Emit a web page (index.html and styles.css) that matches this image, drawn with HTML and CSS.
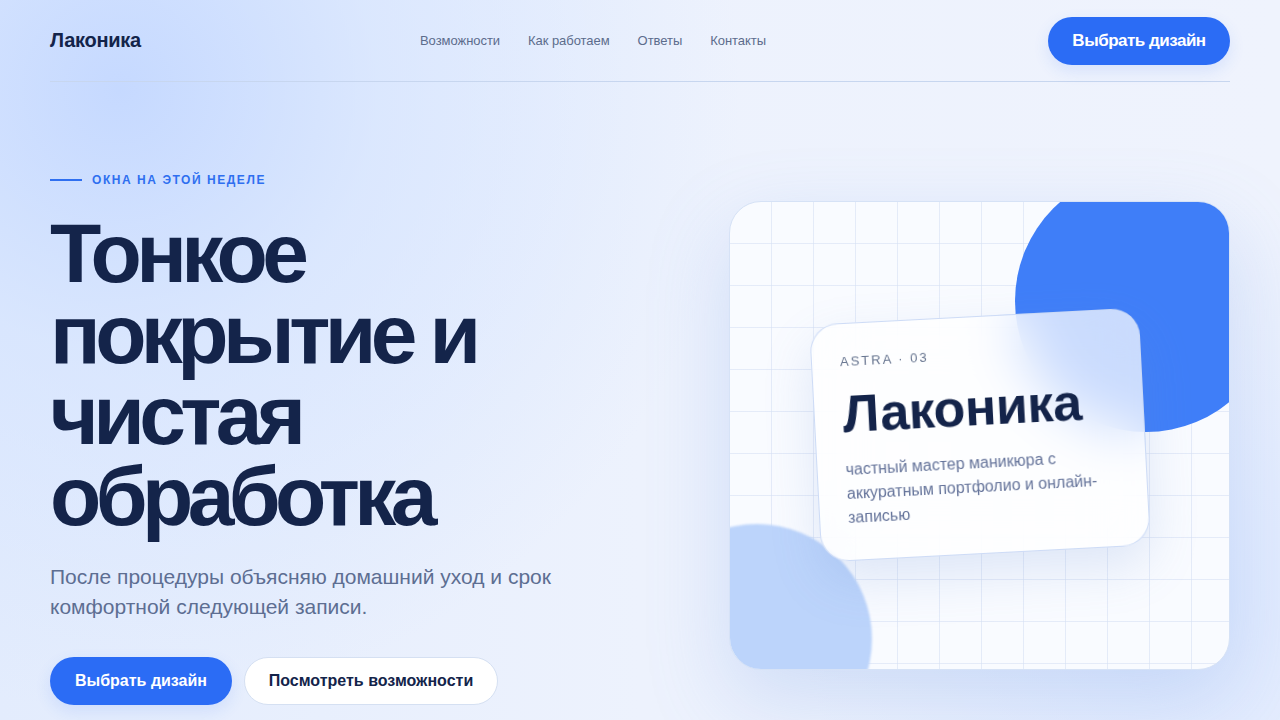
FILE: index.html
```
<!DOCTYPE html>
<html lang="ru">
<head>
<meta charset="utf-8">
<title>Лаконика</title>
<link rel="stylesheet" href="styles.css">
</head>
<body>
<div class="page">
  <header class="header">
    <div class="logo">Лаконика</div>
    <nav class="nav">
      <a href="#">Возможности</a>
      <a href="#">Как работаем</a>
      <a href="#">Ответы</a>
      <a href="#">Контакты</a>
    </nav>
    <a class="btn btn-primary btn-head" href="#">Выбрать дизайн</a>
  </header>
  <main class="hero">
    <section class="hero-text">
      <div class="eyebrow"><span class="eyebrow-line"></span>ОКНА НА ЭТОЙ НЕДЕЛЕ</div>
      <h1 class="title">Тонкое покрытие и чистая обработка</h1>
      <p class="lead">После процедуры объясняю домашний уход и срок комфортной следующей записи.</p>
      <div class="actions">
        <a class="btn btn-primary" href="#">Выбрать дизайн</a>
        <a class="btn btn-ghost" href="#">Посмотреть возможности</a>
      </div>
    </section>
    <section class="visual">
      <div class="canvas">
        <div class="blob blob-big"></div>
        <div class="blob blob-small"></div>
        <div class="glass">
          <div class="glass-tag">ASTRA · 03</div>
          <div class="glass-title">Лаконика</div>
          <div class="glass-text">частный мастер маникюра с аккуратным портфолио и онлайн-записью</div>
        </div>
      </div>
    </section>
  </main>
</div>
</body>
</html>
```
FILE: styles.css
```
* { box-sizing: border-box; }
html, body { margin: 0; padding: 0; }
body {
  width: 1280px;
  height: 720px;
  overflow: hidden;
  font-family: "Liberation Sans", Arial, sans-serif;
  color: #13244a;
  background:
    radial-gradient(circle at 120px 90px, rgba(196, 216, 255, 0.95) 0, rgba(210, 226, 255, 0.6) 260px, rgba(230, 238, 255, 0) 620px),
    radial-gradient(circle at 1200px 600px, rgba(214, 228, 255, 0.7) 0, rgba(230, 238, 255, 0) 400px),
    linear-gradient(90deg, #e3ecfd 0%, #edf2fd 50%, #eff3fd 100%);
}
a { text-decoration: none; color: inherit; }
.page { padding: 0 50px; }

.header {
  height: 82px;
  display: flex;
  align-items: center;
  border-bottom: 1px solid #c7d6ef;
}
.logo {
  font-size: 20px;
  font-weight: 700;
  letter-spacing: -0.3px;
  color: #13244a;
  width: 370px;
}
.nav {
  display: flex;
  gap: 28px;
  font-size: 13px;
  color: #5c6c8c;
  flex: 1;
}
.nav a { letter-spacing: -0.05px; }
.btn {
  display: inline-flex;
  align-items: center;
  justify-content: center;
  height: 48px;
  border-radius: 24px;
  font-weight: 700;
  font-size: 16px;
}
.btn-primary {
  background: #2b6cf5;
  color: #fff;
  box-shadow: 0 6px 16px rgba(43, 108, 245, 0.12);
}
.btn-head {
  width: 182px;
  font-size: 17px;
  letter-spacing: -0.5px;
}
.hero {
  display: flex;
  justify-content: space-between;
}
.hero-text {
  padding-top: 91px;
  width: 560px;
}
.eyebrow {
  display: flex;
  align-items: center;
  gap: 10px;
  font-size: 12px;
  font-weight: 700;
  letter-spacing: 1.55px;
  color: #2f6ff0;
  height: 14px;
}
.eyebrow-line {
  width: 32px;
  height: 2px;
  background: #2f6ff0;
}
.title {
  margin: 26px 0 0;
  font-size: 84px;
  line-height: 81px;
  font-weight: 700;
  letter-spacing: -5.6px;
  color: #14244a;
  width: 470px;
}
.lead {
  margin: 25px 0 0;
  font-size: 21px;
  line-height: 30px;
  color: #5d6e92;
  width: 540px;
}
.actions {
  display: flex;
  gap: 12px;
  margin-top: 35px;
}
.actions .btn-primary { width: 182px; }
.btn-ghost {
  width: 254px;
  background: #fff;
  border: 1px solid #d5e0f2;
  color: #13244a;
}

.visual {
  padding-top: 119px;
}
.canvas {
  position: relative;
  width: 501px;
  height: 469px;
  border-radius: 32px;
  overflow: hidden;
  border: 1px solid #d6e2f6;
  background-color: #f9fbff;
  background-image:
    linear-gradient(rgba(214, 225, 244, 0.6) 1px, transparent 1px),
    linear-gradient(90deg, rgba(214, 225, 244, 0.6) 1px, transparent 1px);
  background-size: 42px 42px;
  background-position: -1px -1px;
  box-shadow: 0 30px 80px rgba(120, 160, 230, 0.25);
}
.blob {
  position: absolute;
  border-radius: 50%;
}
.blob-big {
  width: 262px;
  height: 262px;
  left: 285px;
  top: -32px;
  background: #3f7ef8;
}
.blob-small {
  width: 230px;
  height: 230px;
  left: -88px;
  top: 322px;
  background: #bcd4fb;
  filter: blur(1px);
}
.glass {
  position: absolute;
  left: 85px;
  top: 114px;
  width: 330px;
  height: 238px;
  padding: 30px 28px 0 28px;
  border-radius: 28px;
  background: rgba(255, 255, 255, 0.72);
  border: 1px solid rgba(200, 215, 245, 0.9);
  backdrop-filter: blur(28px);
  -webkit-backdrop-filter: blur(28px);
  transform: rotate(-3deg);
  box-shadow: 0 20px 50px rgba(100, 140, 210, 0.18);
}
.glass-tag {
  font-size: 13px;
  letter-spacing: 2px;
  color: #66748f;
}
.glass-title {
  margin-top: 15px;
  font-size: 52px;
  font-weight: 700;
  letter-spacing: -0.4px;
  color: #14244a;
}
.glass-text {
  margin-top: 14px;
  font-size: 16px;
  line-height: 24px;
  color: #64739a;
  width: 270px;
}
```
